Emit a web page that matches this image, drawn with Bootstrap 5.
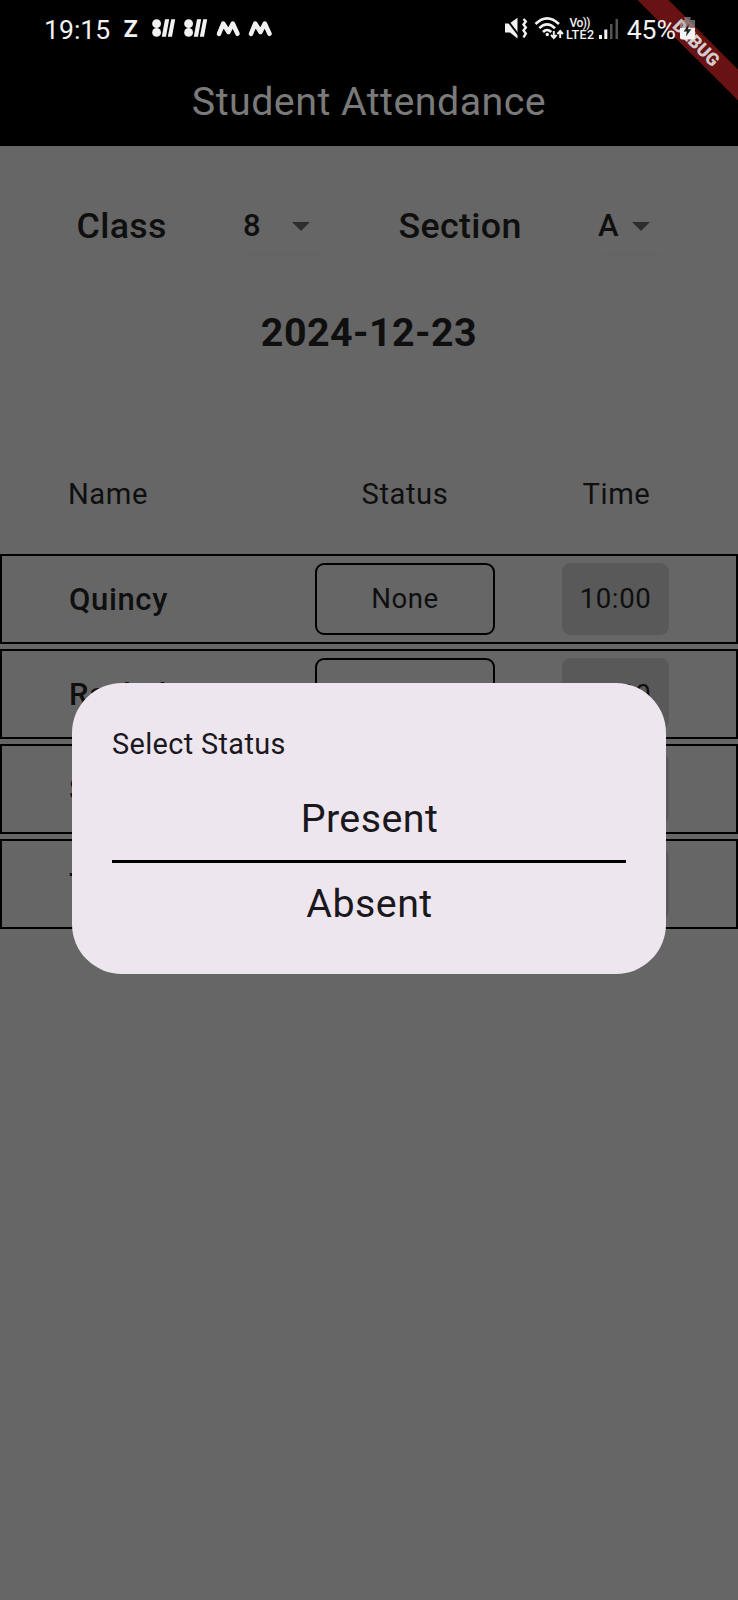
<!DOCTYPE html>
<html lang="en">
<head>
<meta charset="utf-8">
<meta name="viewport" content="width=device-width, initial-scale=1">
<title>Student Attendance</title>
<link href="https://cdn.jsdelivr.net/npm/bootstrap@5.3.0/dist/css/bootstrap.min.css" rel="stylesheet">
<style>
  body { font-family: Roboto, "Liberation Sans", sans-serif; background: #666; color: #0f0f0f; letter-spacing: .45px; }
  .screen { width: 738px; height: 1600px; }
  .topbar { height: 146px; background: #000; }
  .statusbar { height: 59px; padding-left: 44px; color: #f2f2f2; font-size: 26.6px; letter-spacing: 0; line-height: 59px; position: relative; z-index: 2; }
  .statusbar svg { overflow: visible; }
  .app-title { color: #7a7a7a; font-size: 39.4px; line-height: 86px; }
  .z-icon { font: 700 22.6px/58px Inter, sans-serif; width: 16px; margin-left: 13px; }
  .filters { height: 60px; margin-top: 50px; padding-left: 76.5px; font-weight: 500; line-height: 60px; }
  .filter-name { font-size: 35.8px; letter-spacing: .35px; }
  .picker { font-size: 31px; position: relative; }
  .picker::after { content: ""; position: absolute; left: 4px; right: -12px; bottom: 1px; height: 1px; background: #626262; }
  .date { font-size: 39.4px; font-weight: 700; line-height: 60px; margin-top: 47px; }
  .cols { display: grid; grid-template-columns: 315px 180px 67px 107px; }
  .head { margin-top: 101px; height: 90px; line-height: 60px; font-size: 29.2px; letter-spacing: .55px; }
  .student { height: 90px; margin-bottom: 5px; border: 2px solid #000; grid-template-columns: 313px 180px 67px 107px; align-items: center; line-height: 72px; }
  .student .who { font-size: 31px; font-weight: 500; letter-spacing: .65px; padding: 1px 0 0 67px; }
  .pill { height: 72px; font-size: 27.6px; letter-spacing: .6px; text-align: center; border-radius: 9px; }
  .pill-line { border: 2px solid #000; line-height: 67px; }
  .pill-fill { background: #595959; line-height: 71px; }
  .student + .student .pill-fill { line-height: 73px; }
  .dialog-box { position: absolute; left: 72px; top: 682.5px; width: 594px; height: 291px; border-radius: 50px; background: #ede6ee; color: #1a181d; padding: 40px; }
  .dialog-title { font-size: 28.9px; line-height: 42px; letter-spacing: .35px; }
  .choice { font-size: 39.4px; letter-spacing: .45px; text-align: center; padding-left: 1px; }
  .ribbon { position: absolute; left: 595.5px; top: 32px; width: 200px; height: 22px; background: #691214; color: #d4cccc; font-size: 18px; font-weight: 900; line-height: 22px; text-align: center; letter-spacing: 0; transform: rotate(45deg); }
  .battery { position: absolute; left: 680px; top: 17px; z-index: 3; }
</style>
</head>
<body>
<main class="screen position-relative overflow-hidden">
  <header class="topbar">
    <div class="statusbar d-flex">
      <span>19:15</span>
      <span class="z-icon">Z</span>
      <svg width="119" height="18" viewBox="0 0 119 18" style="margin:19px 0 0 13px" fill="#f2f2f2">
        <g id="dots"><circle cx="4.600" cy="4.700" r="4.400"/><circle cx="4.600" cy="13.400" r="4.400"/><path d="M13 .3h4.200L14 17.700H9.800zM19.200.3h4L20 17.700h-4.200z"/></g>
        <use href="#dots" x="32"/>
        <path id="wave" d="M67 14.800L71.200 4.500L76.500 13L80.800 4.500L85.500 14.800" fill="none" stroke="#f2f2f2" stroke-width="4.500" stroke-linejoin="round" stroke-linecap="round"/>
        <use href="#wave" x="32"/>
      </svg>
      <svg class="ms-auto" width="114" height="24" viewBox="0 0 114 24" style="margin-top:17px" fill="none">
        <path d="M0 6.500h4.500L12.500 .8V21.500L5 15.500H0z" fill="#f2f2f2"/><path d="M.5 .8L14 18.500" stroke="#000" stroke-width="2"/>
        <path d="M18.500 2l2.300 2.500-2.300 3 2.300 3-2.300 3 2.300 3-2.300 3.800" stroke="#f2f2f2" stroke-width="2.400"/>
        <path d="M30.500 7Q42-4.200 54 7M34.300 11.200Q42 3.500 50 11.200M38 15Q42 11 46.300 15" stroke="#f2f2f2" stroke-width="2.600"/>
        <circle cx="42.300" cy="17.500" r="1.700" fill="#f2f2f2"/>
        <path d="M48.800 14v7M46 18l2.800 3 2.800-3M55.200 21v-7M52.400 17l2.800-3 2.800 3" stroke="#f2f2f2" stroke-width="1.900"/>
        <g fill="#f2f2f2" font-family="Roboto" font-weight="500"><text x="64.500" y="10" font-size="12" textLength="21">Vo))</text><text x="61" y="22" font-size="12.500" textLength="28">LTE2</text></g>
        <path d="M94 18h3v4h-3zM99.300 12.500h3V22h-3z" fill="#f2f2f2"/><path d="M105 7h2.500v15H105zM110.500 2h2.500v20h-2.500z" fill="#555"/>
      </svg>
      <span style="margin:0 62px 0 8px">45%</span>
    </div>
    <h1 class="app-title fw-normal text-center m-0">Student Attendance</h1>
  </header>

  <section class="filters d-flex">
    <span class="filter-name" style="width:166.500px">Class</span>
    <span class="picker d-flex" style="width:66.500px">8
      <svg class="ms-auto" width="18" height="9" style="margin-top:25.500px"><path d="M0 0h18L9 9z" fill="#2e2e2e"/></svg></span>
    <span class="filter-name" style="margin-left:89px;width:199.500px">Section</span>
    <span class="picker d-flex" style="width:51.500px">A
      <svg class="ms-auto" width="18" height="9" style="margin-top:25.500px"><path d="M0 0h18L9 9z" fill="#2e2e2e"/></svg></span>
  </section>
  <h2 class="date text-center mb-0">2024-12-23</h2>

  <div class="cols head">
    <span style="padding-left:68px">Name</span><span class="text-center">Status</span><span></span><span class="text-center" style="padding-left:2px">Time</span>
  </div>
  <div class="cols student"><span class="who">Quincy</span><span class="pill pill-line">None</span><span></span><span class="pill pill-fill">10:00</span></div>
  <div class="cols student"><span class="who">Rachel</span><span class="pill pill-line"></span><span></span><span class="pill pill-fill">10:00</span></div>
  <div class="cols student"><span class="who">Sarah</span><span class="pill pill-line"></span><span></span><span class="pill pill-fill"></span></div>
  <div class="cols student"><span class="who">Thomas</span><span class="pill pill-line"></span><span></span><span class="pill pill-fill"></span></div>

  <div class="dialog-box" role="dialog">
    <div class="dialog-title">Select Status</div>
    <div class="choice" style="line-height:60px;margin-top:24px">Present</div>
    <div style="height:3px;background:#000;margin-top:11px"></div>
    <div class="choice" style="line-height:60px;margin-top:11px">Absent</div>
  </div>

  <div class="ribbon">DEBUG</div>
  <svg class="battery" width="15" height="23" viewBox="0 0 15 23"><path d="M4.500 0h6v3H15v8H0V3h4.500z" fill="#aaa" opacity=".6"/><path d="M0 11h15v9.500q0 2-2 2H2q-2 0-2-2z" fill="#f4f4f4"/><path d="M8.800 7L3.600 14.500h3.200L6 19.500l5.300-7.200H8z" fill="#222"/></svg>
</main>
<script src="https://cdn.jsdelivr.net/npm/bootstrap@5.3.0/dist/js/bootstrap.bundle.min.js"></script>
</body>
</html>
